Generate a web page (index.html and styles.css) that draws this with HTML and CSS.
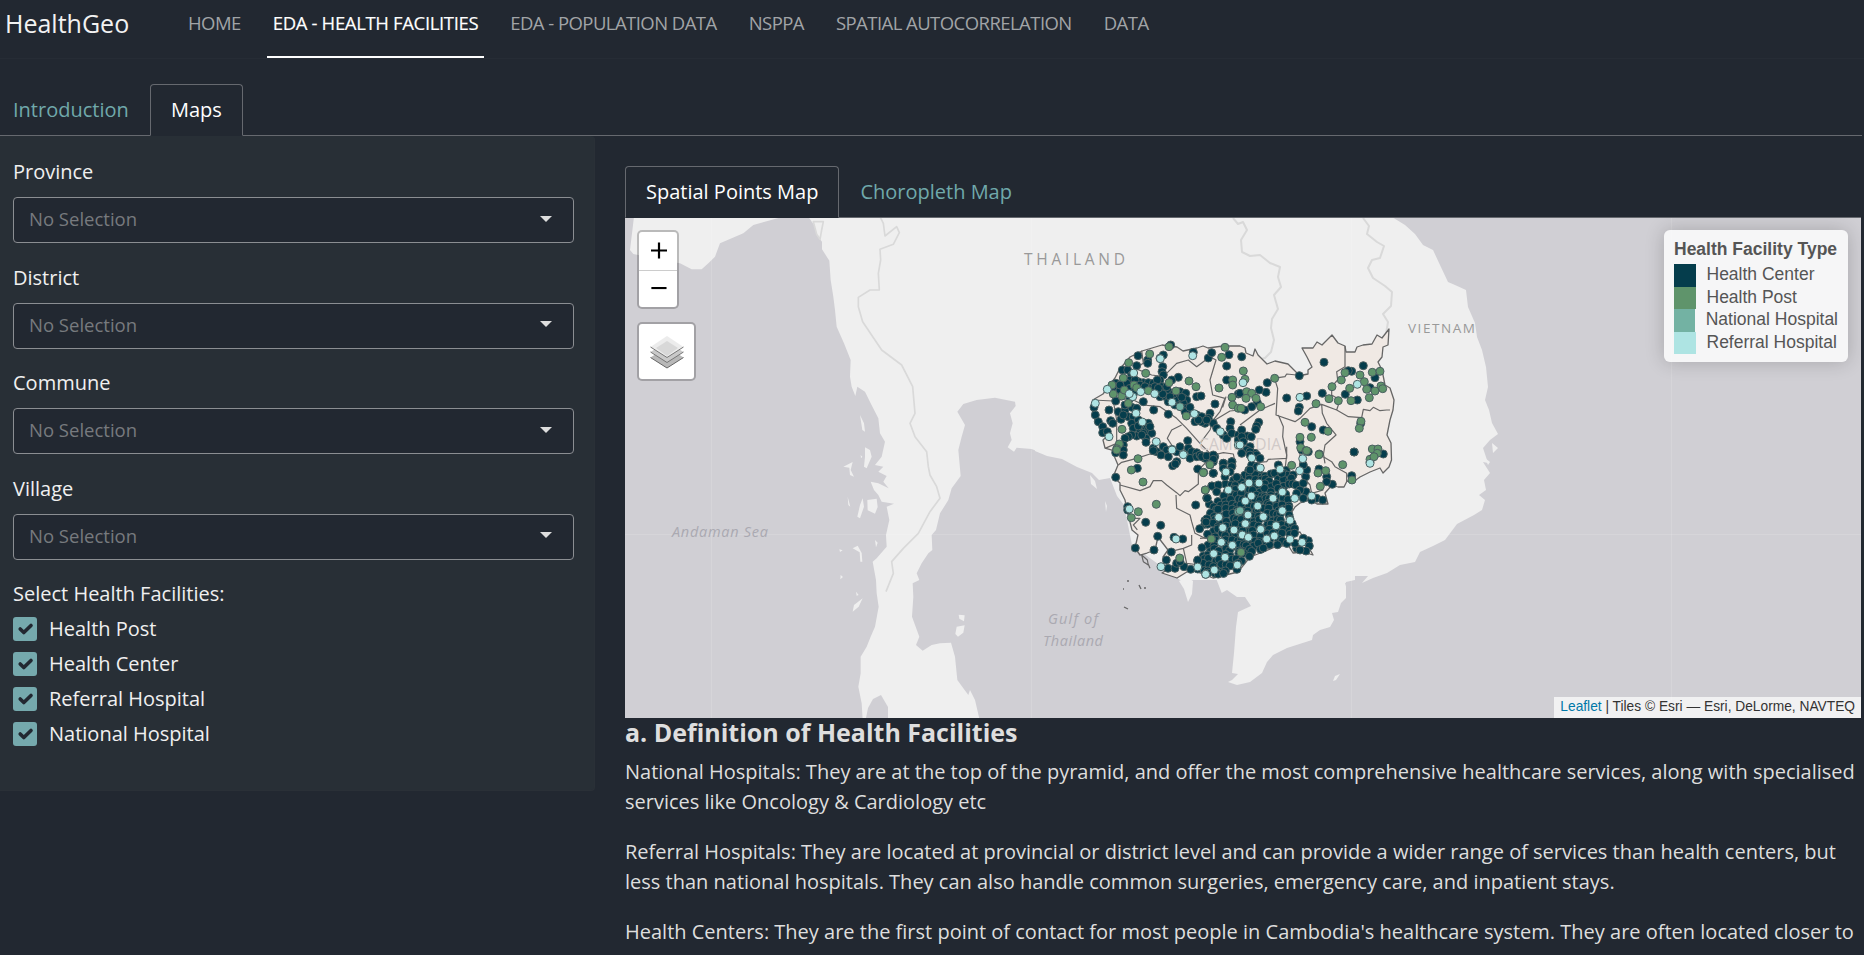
FILE: index.html
```html
<!DOCTYPE html>
<html lang="en">
<head>
<meta charset="utf-8">
<title>HealthGeo</title>
<link rel="stylesheet" href="styles.css">
</head>
<body>
<header class="navbar">
  <a class="brand">HealthGeo</a>
  <nav class="nav">
    <a class="nav-link">HOME</a>
    <a class="nav-link active">EDA - HEALTH FACILITIES</a>
    <a class="nav-link">EDA - POPULATION DATA</a>
    <a class="nav-link">NSPPA</a>
    <a class="nav-link">SPATIAL AUTOCORRELATION</a>
    <a class="nav-link">DATA</a>
  </nav>
</header>

<div class="tabs page-tabs">
  <a class="tab">Introduction</a>
  <a class="tab active">Maps</a>
</div>

<div class="layout">
  <aside class="sidebar">
    <div class="field"><label>Province</label><div class="select"><span>No Selection</span><i class="caret"></i></div></div>
    <div class="field"><label>District</label><div class="select"><span>No Selection</span><i class="caret"></i></div></div>
    <div class="field"><label>Commune</label><div class="select"><span>No Selection</span><i class="caret"></i></div></div>
    <div class="field"><label>Village</label><div class="select"><span>No Selection</span><i class="caret"></i></div></div>
    <div class="checks">
      <div class="checks-title">Select Health Facilities:</div>
      <div class="check"><svg class="box" viewBox="0 0 20 20"><path d="M6 10l3 3 6-6"/></svg><span>Health Post</span></div>
      <div class="check"><svg class="box" viewBox="0 0 20 20"><path d="M6 10l3 3 6-6"/></svg><span>Health Center</span></div>
      <div class="check"><svg class="box" viewBox="0 0 20 20"><path d="M6 10l3 3 6-6"/></svg><span>Referral Hospital</span></div>
      <div class="check"><svg class="box" viewBox="0 0 20 20"><path d="M6 10l3 3 6-6"/></svg><span>National Hospital</span></div>
    </div>
  </aside>

  <main class="content">
    <div class="tabs map-tabs">
      <a class="tab active">Spatial Points Map</a>
      <a class="tab">Choropleth Map</a>
    </div>
    <div class="map">
      <svg class="map-svg" viewBox="625 218 1236 500">
        <g class="land">
          <g transform="translate(620 210) scale(.33333)">
            <path d="M42 20L30 120 40 132 180 160 215 178 245 178 265 160 285 140 300 100 370 70 400 45 490 20z"/>
            <path d="M565 20L582 45 590 75 606 95 606 118 628 152 632 210 640 260 645 300 650 350 672 400 692 450 690 500 695 530 706 558 712 530 735 545 752 580 775 625 780 670 795 695 785 740 765 765 790 770 775 785 800 798 790 815 806 835 775 820 752 815 762 840 775 855 785 875 822 881 800 890 808 930 798 975 800 1010 770 1045 758 1055 768 1110 770 1150 776 1190 765 1250 752 1280 740 1310 722 1340 722 1390 715 1430 725 1480 728 1530H1079L1065 1470 1050 1440 1045 1455 1030 1435 1012 1410 1005 1340 993 1298 960 1300 935 1305 908 1322 888 1305 898 1280 876 1220 880 1160 878 1120 898 1110 890 1090 905 1060 925 1030 937 1020 935 975 948 960 960 910 985 870 995 835 1022 798 1015 720 1025 680 1035 645 1012 605 1030 582 1070 570 1125 563 1185 575 1187 588 1170 610 1178 640 1170 670 1175 690 1163 712 1182 725 1190 713 1235 717 1262 728 1262 20z"/>
            <path d="M720 615l12 25 3 25-8-5zM735 712l15 8 5 20-15 35-8-5 3-30zM722 735l5 5-4 5zM670 770l28-14-6 24 10 20-12-5-2-22zM683 860l8 30-6-5zM728 865l4 25-12 35-8-5 8-35zM742 870l28-4 3 25-8 20-22-10zM698 1015l15-8 12 22 2 26-6 0-2-28zM658 1018l10 3-8 5zM662 1095l7 6-8 7zM765 990l8 8-5 14zM708 1145l8 10-6 2zM728 1165l-12 25-18 15 4-20zM1016 1214l18 2-2 18-14-8zM1010 1250l24-4-4 22-16 12-8-8z"/>
          </g>
          <path d="M1035 216L1035 451 1047 456 1062 459 1077 467 1092 473 1099 480 1110 478 1117 496 1124 505 1132 545 1180 580 1216.700 580 1221.700 593 1227 590 1237 597 1245 597 1251 606 1238 612 1236 627 1234 653 1232 673 1238 674 1232 680 1228 682 1237 685 1250 682 1262 673 1267 662 1273 655 1287 648 1312 640 1313 635 1320 630 1330 627 1334 620 1332 613 1338 612 1341 603 1346 598 1346 582 1355 580 1355 576 1368 576 1362 583 1373 578 1387 573 1400 565 1415 562 1420 552 1433 546 1445 540 1457 524 1474 515 1482 510 1485 500 1479 495 1486 490 1484 480 1490 473 1483 462 1488 463 1483 448 1490 440 1498 434 1492 423 1489 410 1485 400 1488 387 1486 367 1482 350 1477 337 1475 323 1468 307 1466 290 1455 285 1448 282 1440 265 1433 250 1423 245 1415 234 1405 225 1392 217z"/>
          <path d="M1179 581l8-4 6 4-1 13-4 8-4-13zM1340 674l-4 6-3 1 2-5zM1090 475l5 6 2 8-6-5zM1105 501l2 5-1 6zM1492 443l6 5-5 5zM1485 458l5 4-2 3z"/>
        </g>
        <path class="sea" d="M866 718l2-10 5-9 8-4 7 12v11z"/>
        <path class="sea" d="M1345 583l12-3-2 5-8 5z"/>
        <path class="graticule" d="M711.500 218v500M1031.500 218v500M1351.500 218v500M1671.500 218v500M625 534.500h1236"/>
        <g class="border-line">
          <path transform="translate(620 210) scale(.33333)" d="M780 20L790 40 795 78 830 50 838 68 820 103 780 118 782 150 775 190 778 240 750 240 715 262 715 290 728 335 785 420 845 465 878 530 885 610 870 640 885 680 920 725 925 770 930 795 950 830 960 865 930 905 895 970 850 1015 815 1055 820 1090 798 1145M580 35l30 0-5 25-5 28-10-15z"/>
          <path d="M1233 218l5 6 5-2 4 8-6 10 1 12 8 4 10-1 10 8 10 4-2 10 3 10-7 8 4 14-6 10-1 9 3 12-3 12-6 6-8 2M1363 218l6 8-2 8 10 8 7 4-4 12-8 2-4 8 5 10 12 8 7 6-1 14-8 8 5 8-2 12"/>
        </g>
        <g class="province">
          <path d="M1092.700 400L1103 394 1115 378 1119 370 1130 357 1142 351 1162 345 1177 347 1183 351 1197 348 1203 346 1208 348 1223 346 1240 346 1245 348 1246 353 1253 356 1255 349 1258 355 1267 364 1275 361 1288 364 1297 373 1303 375 1308 374 1308 370 1312 367 1307 357 1302 348 1313 348 1317 342 1322 345 1332 335 1338 343 1345 346 1346 352 1355 352 1357 347 1363 345 1372 344 1377 335 1382 338 1389 329 1388 345 1383 347 1382 357 1378 362 1382 370 1385 385 1390 388 1394 400 1393 410 1390 420 1387 435 1391 443 1391.500 460 1389 467 1383 473 1380 468 1370 472 1360 477 1353 482 1347 481 1344 487 1338 487 1332 485 1325 493 1328 504 1317 504 1310 500 1300 503 1295 507 1290 515 1297 528 1295 533 1300 532 1303 537 1313 555 1303 552 1293 553 1288 545 1275 547 1263 552 1250 557 1238 572 1213 578 1200 573 1190 570 1177 578 1162 573 1170 568 1163 557 1168 550 1158 537 1155 550 1147 553 1140 555 1135 548 1138 535 1132 530 1130 522 1127 510 1125 500 1120 490 1120 483 1113 477 1118 465 1115 458 1112 450 1105 448 1103 440 1110 433 1100 427 1093 417 1092 407z"/>
          <g transform="translate(1080 320) scale(.33333)">
            <path d="M38 240L100 243 150 235 190 255 240 260 290 295 320 325 360 370 390 400M185 92L190 130 165 145 215 165 250 170 290 130 325 120 350 140 390 110 408 120 390 180 398 225 435 235 420 275 400 300 390 330 360 370M405 300L430 285 450 273 480 270M305 315L275 330 262 355 275 375 280 400M75 385L110 370 110 300 100 243M438 230L428 262"/>
          </g>
          <g transform="translate(1240 320) scale(.33333)">
            <path d="M105 180L113 205 108 285 165 305 180 295 210 265 245 253 290 270 325 290 365 293 370 268 390 272 400 262 420 272 440 270 450 270M315 78L315 140 290 155 293 180 275 200 275 225 300 240 290 270M115 285L130 320 128 350 140 405M245 253L247 280 260 310 288 345 255 375 250 405M100 175L135 170 140 162 170 165M0 315L60 270 105 250M140 405l-5 45 20 20M250 400l5 30"/>
          </g>
          <g transform="translate(1080 450) scale(.33333)">
            <path d="M115 45L125 37 170 25 210 12 260 20M120 105L180 122 210 110 220 92 245 92 260 105 290 128 300 137 315 122 325 125 355 102 355 60 400 15 430 8 460 12 468 50M288 135L290 175 330 195 335 215 345 250 375 265 395 262M335 255L335 285 310 295 270 305M310 295L320 340 360 345M155 205L180 205 160 225 172 240M185 315l5 20 15 10-3-15zM210 355l-5-12"/>
          </g>
          <g transform="translate(1200 450) scale(.33333)">
            <path d="M145 40L200 35 205 28 260 25 260 -10M300 0L300 70 330 105 335 130 370 120M370 20L395 35 405 50 440 70 440 95M0 265L35 262 60 275"/>
          </g>
          <path d="M1127 581h2M1123 589h1M1139 585l2 4M1144 588h2M1124 607l4 2"/>
        </g>
        <g class="places">
          <text x="1024" y="264.500" textLength="101" font-size="15.500">THAILAND</text>
          <text x="1408" y="332.500" textLength="67" font-size="13.500">VIETNAM</text>
          <text class="faint" x="1199" y="450" textLength="82" font-size="15.500">CAMBODIA</text>
          <text class="water" x="672" y="537" textLength="96" font-size="14.500">Andaman Sea</text>
          <text class="water" x="1048" y="624" textLength="50" font-size="14.500">Gulf of</text>
          <text class="water" x="1043" y="646" textLength="60" font-size="14.500">Thailand</text>
        </g>
        <g id="markers"></g>
      </svg>
      <div class="controls">
        <div class="zoom">
          <svg viewBox="0 0 38 38"><path d="M12 18.500h16M20 10.500v16"/></svg>
          <svg viewBox="0 0 38 38"><path d="M12 18h16"/></svg>
        </div>
        <div class="layers">
          <svg viewBox="0 0 36 34">
            <path d="M1.500 22.500L18 33 34.500 22.500 18 12z" fill="#b8b8b8"/><path d="M1.500 22.500L18 33 34.500 22.500" fill="none" stroke="#666"/>
            <path d="M1.500 17L18 27.500 34.500 17 18 7z" fill="#c9c9c9"/><path d="M1.500 17L18 27.500 34.500 17" fill="none" stroke="#777"/>
            <path d="M1.500 12L18 22.500 34.500 12 18 1z" fill="#ececec"/><path d="M7 13l11-7 11 7-11 8z" fill="#d8d8d8"/><path d="M1.500 12L18 22.500 34.500 12" fill="none" stroke="#777"/>
          </svg>
        </div>
      </div>
      <div class="legend">
        <strong>Health Facility Type</strong>
        <div class="legend-row"><i class="swatch center"></i>Health Center</div>
        <div class="legend-row"><i class="swatch post"></i>Health Post</div>
        <div class="legend-row"><i class="swatch national"></i>National Hospital</div>
        <div class="legend-row"><i class="swatch referral"></i>Referral Hospital</div>
      </div>
      <div class="attribution"><a>Leaflet</a> | Tiles © Esri — Esri, DeLorme, NAVTEQ</div>
    </div>
    <h4>a. Definition of Health Facilities</h4>
    <p>National Hospitals: They are at the top of the pyramid, and offer the most comprehensive healthcare services, along with specialised<br>services like Oncology &amp; Cardiology etc</p>
    <p>Referral Hospitals: They are located at provincial or district level and can provide a wider range of services than health centers, but<br>less than national hospitals. They can also handle common surgeries, emergency care, and inpatient stays.</p>
    <p>Health Centers: They are the first point of contact for most people in Cambodia's healthcare system. They are often located closer to</p>
  </main>
</div>
<script src="app.js"></script>
</body>
</html>
```
FILE: styles.css
```css
* { box-sizing: border-box; }
html, body { height: 955px; overflow: hidden; }
body {
  margin: 0;
  background: #222831;
  color: #dedede;
  font: 20px/30px "Open Sans", "Noto Sans", sans-serif;
}
.navbar { display: flex; height: 59px; padding-left: 5px; border-bottom: 1px solid #262c35; }
.brand { width: 177px; font-size: 25px; line-height: 46px; color: #f2f2f2; }
.nav { display: flex; gap: 20px; }
.nav-link {
  height: 58px; padding: 0 6px; line-height: 46px;
  font-size: 18.500px; letter-spacing: -.55px; color: #a1a4a7; white-space: nowrap;
}
.nav-link.active { color: #fff; border-bottom: 2px solid #fff; letter-spacing: -.35px; -webkit-text-stroke: .15px #fff; }

.tabs { display: flex; height: 52px; border-bottom: 1px solid #66696f; }
.tab { height: 52px; padding: 10px 20px; border: 1px solid transparent; color: #70a9ab; white-space: nowrap; }
.tab.active { color: #fff; border-color: #66696f; border-bottom-color: #222831; border-radius: 4px 4px 0 0; background: #222831; }
.page-tabs { margin: 25px 2px 0 0; }
.page-tabs .tab:first-child { width: 150px; padding-left: 12px; }

.layout { display: flex; align-items: flex-start; }
.sidebar {
  width: 595px; height: 655px; padding: 20px 20px 0 13px;
  background: #282f36; border: 1px solid #2a3037; border-width: 0 1px 1px 0; border-radius: 0 4px 4px 0;
  color: #f0f0f0;
}
.field { height: 105.500px; }
.field label { display: block; height: 41px; line-height: 31px; }
.select {
  display: flex; align-items: center; justify-content: space-between;
  height: 46px; padding: 0 21px 2px 15px;
  background: #222831; border: 1px solid #8b8e92; border-radius: 4px;
  font-size: 18.500px; color: #777a7e;
}
.caret { border: 6px solid transparent; border-top-color: #dedede; border-bottom: 0; margin-top: -1px; }
.checks-title { height: 32px; margin-top: 1px; }
.check { display: flex; align-items: center; gap: 12px; height: 35px; }
.box { width: 24px; height: 24px; border-radius: 3px; background: #75a9ad; }
.box path { fill: none; stroke: #222831; stroke-width: 3; stroke-linecap: round; stroke-linejoin: round; }

.content { width: 1236px; margin-left: 30px; padding-top: 30px; }
.map { position: relative; width: 1236px; height: 500px; background: #d0cfd4; overflow: hidden; }
.map-svg { display: block; width: 1236px; height: 500px; }
.land path { fill: #efefef; }
.sea { fill: #d0cfd4; }
.graticule { fill: none; stroke: #fff; stroke-opacity: .13; }
.border-line path { fill: none; stroke: #d9d9d9; stroke-width: 2; stroke-linejoin: round; }
.border-line path:first-child { stroke-width: 5; }
.province path { fill: #f0e9e4; stroke: #666; stroke-width: 1.300; stroke-linejoin: round; }
.province g path { fill: none; stroke-width: 3.600; }
.places { font-family: "Open Sans", sans-serif; fill: #999; }
.places .faint { fill: #d0cac8; }
.places .water { font-style: italic; fill: #aaa9b1; }
#markers circle { stroke: #4a5f61; stroke-width: 1; }
.hc { fill: #053d4c; }
.hp { fill: #5f946b; }
.nh { fill: #73b2a3; }
.rh { fill: #aee4e3; }

.controls { position: absolute; left: 12px; top: 12px; }
.zoom, .layers { background: #fff; background-clip: padding-box; border: 2px solid rgba(0,0,0,.22); border-radius: 5px; }
.zoom { width: 42px; height: 79px; }
.zoom svg { display: block; width: 38px; height: 38px; }
.zoom svg + svg { height: 37px; border-top: 1px solid #ccc; }
.zoom path { fill: none; stroke: #000; stroke-width: 2.200; }
.layers { display: flex; align-items: center; justify-content: center; width: 59px; height: 59px; margin-top: 13px; }
.layers svg { width: 36px; height: 34px; }

.legend {
  position: absolute; left: 1039px; top: 12px; width: 184px; height: 132px; padding: 8px 10px;
  background: rgba(255,255,255,.8); border-radius: 6px; box-shadow: 0 0 19px rgba(0,0,0,.2);
  font: 17.500px/22.500px "Liberation Sans", Arial, sans-serif; color: #555; white-space: nowrap;
}
.legend strong { display: block; height: 26px; }
.legend-row { display: flex; height: 22.500px; line-height: 21.500px; }
.swatch { width: 22px; margin-right: 10.500px; }
.swatch.center { background: #053d4c; }
.swatch.post { background: #5f946b; }
.swatch.national { background: #73b2a3; }
.swatch.referral { background: #aee4e3; }
.attribution {
  position: absolute; right: 0; bottom: 0; height: 21px; padding: 0 6px;
  background: rgba(255,255,255,.7); font: 13.750px/19px "Liberation Sans", Arial, sans-serif; color: #333; white-space: nowrap;
}
.attribution a { color: #0078a8; }

h4 { margin: -1px 0 10px; font-size: 25px; line-height: 30px; font-weight: 700; }
p { margin: 0 0 20px; white-space: nowrap; }
```
FILE: app.js
```js
// Facility coordinates, one sheet per map quadrant: origin plus offsets in thirds of a pixel.
const sheets = [
  { x: 1080, y: 320,
    hc: "272,75 174,107 203,120 203,130 250,105 240,115 340,97 385,114 395,98 447,104 440,138 170,137 127,150 143,150 155,165 248,140 246,155 250,165 240,180 295,172 275,180 440,180 108,190 100,200 150,180 190,188 205,188 220,190 232,180 140,190 175,185 215,205 225,200 240,215 255,210 265,215 300,215 317,220 310,235 320,240 350,230 363,228 405,252 475,222 42,262 46,285 87,270 107,243 55,305 92,302 98,310 68,320 68,338 82,335 123,280 123,298 115,275 135,270 145,290 155,262 135,255 190,245 160,290 155,310 160,325 180,330 170,348 195,320 205,330 205,310 190,340 215,340 198,355 198,367 221,270 265,283 240,230 258,230 265,245 285,255 300,245 310,250 320,265 330,275 345,305 350,285 365,290 375,310 390,280 385,295 400,310 410,325 452,305 450,325 430,345 440,355 455,340 475,345 475,360 323,362 155,345 145,350 135,355 130,375 130,390 220,385 230,395 250,380 260,390 290,395 300,380 325,385 335,395 350,398 150,205 165,215 150,235 120,210 290,235 280,222 245,200 260,200 270,230 315,275 330,262 305,232 365,305 380,300 355,300 175,300 210,320 180,315 170,265 130,285 165,180 180,195 248,222 120,195 195,200 235,205 185,345 175,318",
    hp: "267,80 209,102 435,82 425,112 146,128 197,160 130,174 327,183 348,200 267,188 288,213 96,195 100,222 125,228 133,210 162,195 170,203 205,212 145,250 417,204 458,180 458,195 456,232 458,255 475,265 319,288 126,328 118,372 110,386",
    nh: "300,260",
    rh: "241,116 338,107 161,159 82,208 158,230 148,221 182,215 224,221 46,250 168,280 187,306 87,350 276,247 343,281 421,335 229,365 276,388 310,402 475,375" },
  { x: 1240, y: 320,
    hc: "5,110 252,127 370,137 178,167 82,188 78,217 58,210 405,173 335,154 325,152 247,220 316,223 200,228 140,234 352,240 178,262 175,273 52,248 35,260 14,270 56,307 50,318 47,328 22,348 34,350 5,330 5,350 30,380 20,390 45,400 215,320 250,330 180,365 343,396 430,402 390,203 362,310 185,390 205,395 0,220 10,365 5,400",
    hp: "10,153 15,178 104,175 20,215 35,220 18,235 48,235 62,260 3,265 315,158 304,180 276,200 329,205 360,165 373,185 397,157 420,154 423,198 428,206 405,213 380,208 388,233 333,242 295,242 267,236 228,251 195,307 180,352 214,352 264,334 363,304 358,325 397,387 414,387 412,400 238,402 182,383 198,392",
    nh: "", rh: "9,188 180,232 352,193 0,375" },
  { x: 1080, y: 450,
    hc: "107,8 130,15 243,15 265,20 290,35 278,47 286,42 330,25 350,20 360,15 375,25 400,35 404,20 430,40 456,35 172,55 107,82 353,57 400,70 347,165 143,170 143,180 197,217 242,226 282,262 308,267 233,259 166,294 222,300 274,306 366,293 259,330 312,350 332,358 264,355 285,355 290,340 300,335 353,330 359,236 378,216 380,144 395,108 220,2",
    hp: "174,26 154,60 189,96 229,163 175,185 154,203 390,44 371,67 376,120 394,267 299,324 110,0",
    nh: "", rh: "276,0 310,14 437,66 148,177 288,267 243,350 353,351 377,373" },
  { x: 1200, y: 450,
    hc: "462,6 510,36 397,103 455,77 380,80 380,95 357,57 317,80 288,105 318,125 310,145 350,145 368,150 325,272 328,288 318,303 290,295 300,300 310,265 285,280 300,120 290,130 320,60 310,45 310,100 5,20 20,18 40,15 40,28 70,40 95,35 95,50 70,55 90,65 75,80 40,70 110,82 150,5 170,15 180,25 155,45 150,15 170,50 36,108 55,105 22,145 150,60 235,45 245,70 335,150 50,125",
    hp: "510,28 522,20 30,44 10,68 16,120 34,267 123,307 275,46 320,2 357,14 354,69 377,62 361,109 428,44 456,90",
    nh: "115,185 120,182",
    rh: "510,40 155,24 181,54 78,66 240,58 308,26 299,62 147,99 177,99 125,112 85,120 154,138 136,153 219,145 247,126 284,145 335,138 173,168 56,202 144,195 190,200 247,182 270,211 68,233 102,240 127,255 145,262 136,221 182,238 228,227 64,277 97,286 200,267 223,258 270,268 306,277 41,311 75,322 112,345 43,360 17,373" }
];

// Outline of the crowded area round the capital, in the last sheet's units.
const crowd = [[60,90],[110,85],[145,60],[200,65],[270,60],[290,80],[280,100],[262,130],[270,175],[285,225],[285,265],[270,280],[230,285],[190,298],[150,320],[110,360],[40,380],[-10,368],[-25,335],[15,300],[28,275],[20,250],[30,235],[0,238],[-5,228],[35,180],[25,155],[70,140]];

const inside = (x, y) => {
  let hit = false;
  for (let i = 0, j = crowd.length - 1; i < crowd.length; j = i++) {
    const [ax, ay] = crowd[i], [bx, by] = crowd[j];
    if ((ay > y) !== (by > y) && x < (bx - ax) * (y - ay) / (by - ay) + ax) hit = !hit;
  }
  return hit;
};

let seed = 11;
const rand = () => (seed = (seed * 16807) % 2147483647) / 2147483647 - 0.5;

const layer = document.getElementById("markers");
const dot = (cls, x, y, r) => {
  const c = document.createElementNS("http://www.w3.org/2000/svg", "circle");
  c.setAttribute("class", cls);
  c.setAttribute("cx", x.toFixed(1));
  c.setAttribute("cy", y.toFixed(1));
  c.setAttribute("r", r);
  layer.append(c);
};

for (let y = 60; y < 385; y += 15)
  for (let x = -25; x < 330; x += 17) {
    const px = x + rand() * 14, py = y + rand() * 12;
    if (inside(px, py)) dot("hc", 1200 + px / 3, 450 + py / 3, 4);
  }

for (const kind of ["hc", "hp", "rh", "nh"])
  for (const s of sheets)
    for (const pair of s[kind].split(" ").filter(Boolean)) {
      const [x, y] = pair.split(",").map(Number);
      dot(kind, s.x + x / 3, s.y + y / 3, 4);
    }
```
